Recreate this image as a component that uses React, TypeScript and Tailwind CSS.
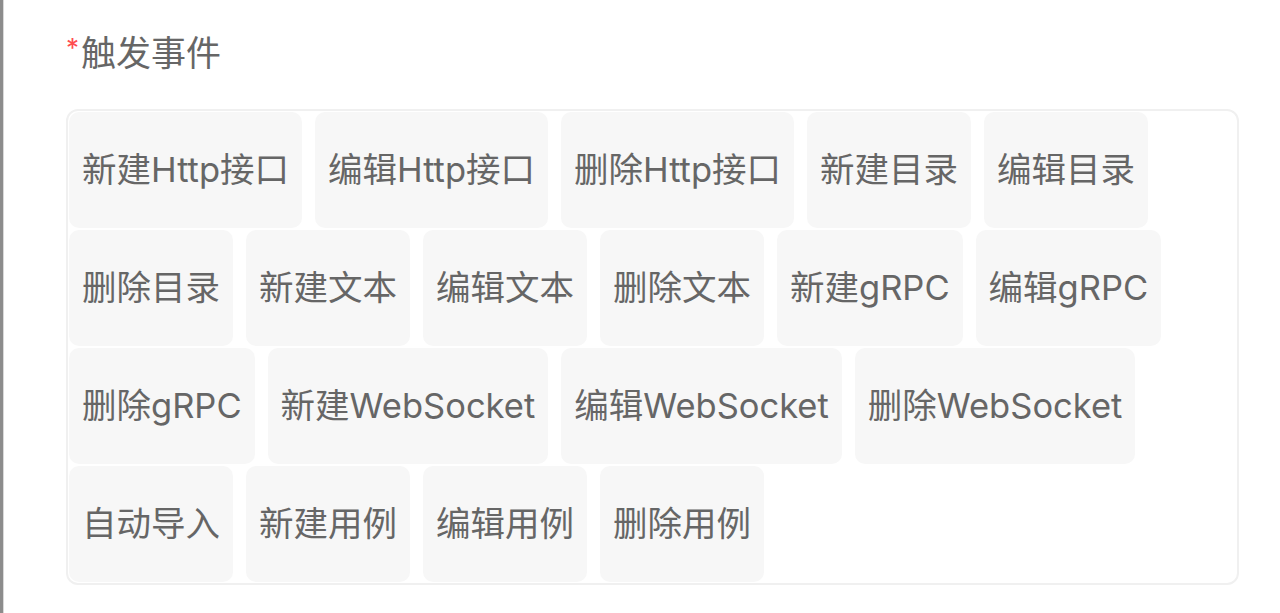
import React from 'react';

const events: string[] = [
  '新建Http接口',
  '编辑Http接口',
  '删除Http接口',
  '新建目录',
  '编辑目录',
  '删除目录',
  '新建文本',
  '编辑文本',
  '删除文本',
  '新建gRPC',
  '编辑gRPC',
  '删除gRPC',
  '新建WebSocket',
  '编辑WebSocket',
  '删除WebSocket',
  '自动导入',
  '新建用例',
  '编辑用例',
  '删除用例',
];

const App: React.FC = () => {
  return (
    <div
      className="flex h-[613px] w-[1280px] bg-white text-[#666666]"
      style={{ fontFamily: "Inter, 'Noto Sans CJK SC', sans-serif" }}
    >
      <div className="w-[3px] shrink-0 bg-[#8c8c8c]" />
      <div className="w-px shrink-0 bg-[#d9d9d9]" />

      <div className="flex-1 pl-[62px] pt-[31px]">
        <div className="flex items-center h-[44px] text-[35px] leading-none">
          <span className="text-[#ff4d4f] text-[26px] -mt-[10px] mr-[2px]">*</span>
          <span>触发事件</span>
        </div>

        <div className="mt-[34px] w-[1173px] h-[476px] rounded-[12px] border-2 border-[#f0f0f0] p-[1px]">
          <div className="flex flex-wrap gap-x-[13px] gap-y-[2px]">
            {events.map((name) => (
              <div
                key={name}
                className="flex h-[116px] items-center rounded-[10px] bg-[#f7f7f7] px-[13px] text-[34.5px] leading-none"
              >
                {name}
              </div>
            ))}
          </div>
        </div>
      </div>
    </div>
  );
};

export default App;
